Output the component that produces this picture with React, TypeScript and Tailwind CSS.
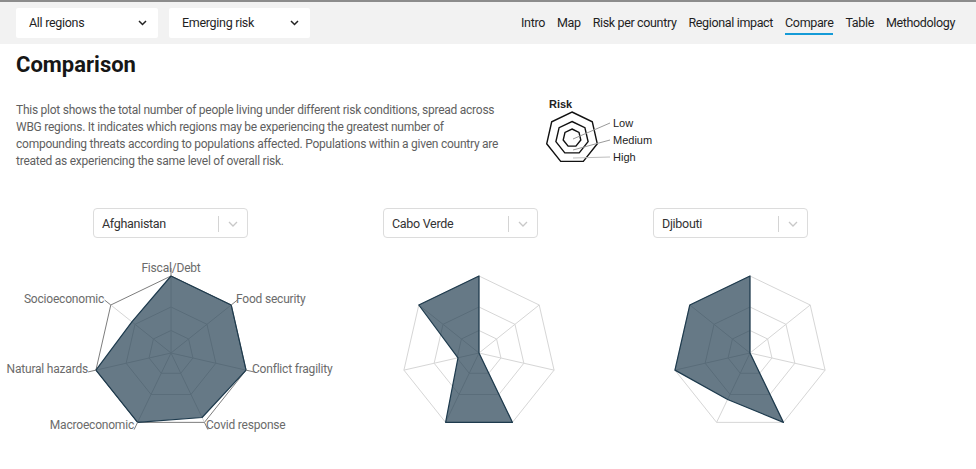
import React from "react";

const FONT = 'Roboto, "Noto Sans", Arial, sans-serif';

const AXES = [
  "Fiscal/Debt",
  "Food security",
  "Conflict fragility",
  "Covid response",
  "Macroeconomic",
  "Natural hazards",
  "Socioeconomic",
];

const R = 77;
const RINGS = [22.5, 46, 77];

function pt(cx: number, cy: number, r: number, i: number): [number, number] {
  const a = (i * 2 * Math.PI) / 7 - Math.PI / 2;
  return [cx + r * Math.cos(a), cy + r * Math.sin(a)];
}

function poly(cx: number, cy: number, rs: number[]): string {
  return rs.map((r, i) => pt(cx, cy, r, i).map((v) => v.toFixed(2)).join(",")).join(" ");
}

type LabelPos = { x: number; y: number; anchor: "start" | "middle" | "end" };

function Radar({
  width,
  cx,
  cy,
  values,
  labels,
  outerDark,
}: {
  width: number;
  cx: number;
  cy: number;
  values: number[];
  labels?: LabelPos[];
  outerDark?: boolean;
}) {
  return (
    <svg width={width} height={200} viewBox={`0 0 ${width} 200`} className="block">
      {RINGS.map((r, k) => (
        <polygon
          key={k}
          points={poly(cx, cy, Array(7).fill(r))}
          fill="none"
          stroke={k === 2 && outerDark ? "#7d7d7d" : "#d6d6d6"}
          strokeWidth={1}
        />
      ))}
      {AXES.map((_, i) => {
        const [x, y] = pt(cx, cy, R, i);
        return <line key={i} x1={cx} y1={cy} x2={x} y2={y} stroke="#d6d6d6" strokeWidth={1} />;
      })}
      <polygon
        points={poly(
          cx,
          cy,
          values.map((v) => v * R)
        )}
        fill="#1d3a4d"
        fillOpacity={0.68}
        stroke="#1d3a4d"
        strokeWidth={1.2}
        strokeLinejoin="round"
      />
      {labels &&
        AXES.map((name, i) => {
          const [x1, y1] = pt(cx, cy, R, i);
          const [x2, y2] = pt(cx, cy, R + 8, i);
          const l = labels[i];
          return (
            <g key={name}>
              <line x1={x1} y1={y1} x2={x2} y2={y2} stroke="#7d7d7d" strokeWidth={1} />
              <text
                x={l.x}
                y={l.y}
                textAnchor={l.anchor}
                dominantBaseline="central"
                fontSize={12}
                letterSpacing={-0.2}
                fill="#6b6b6b"
                style={{ fontFamily: FONT }}
              >
                {name}
              </text>
            </g>
          );
        })}
    </svg>
  );
}

function CountrySelect({ name, ml }: { name: string; ml: string }) {
  return (
    <div
      className={`${ml} flex h-[30px] w-[155px] items-center rounded-[4px] border border-[#dcdcdc] bg-white pl-[8px] pt-[2px] text-[12.5px] tracking-[-0.3px] text-[#333]`}
    >
      <span className="flex-1">{name}</span>
      <span className="h-[16px] w-px bg-[#d4d4d4]" />
      <span className="flex w-[28px] justify-center">
        <svg width="10" height="6" viewBox="0 0 10 6">
          <path d="M1 1l4 4 4-4" fill="none" stroke="#c8c8c8" strokeWidth="1.3" />
        </svg>
      </span>
    </div>
  );
}

function TopSelect({ label, w }: { label: string; w: string }) {
  return (
    <div
      className={`${w} flex h-[30px] items-center justify-between rounded-[2px] bg-white pl-[13px] pr-[11px] text-[12.5px] tracking-[-0.3px] text-[#1f1f1f]`}
    >
      <span>{label}</span>
      <svg width="9" height="6" viewBox="0 0 9 6">
        <path d="M1 1l3.5 3.5L8 1" fill="none" stroke="#222" strokeWidth="1.5" />
      </svg>
    </div>
  );
}

function Legend() {
  const c = [572, 139];
  const hept = (r: number) =>
    Array.from({ length: 7 }, (_, i) => {
      const a = (i * 2 * Math.PI) / 7 - Math.PI / 2;
      return `${(c[0] + r * Math.cos(a)).toFixed(1)},${(c[1] + r * Math.sin(a)).toFixed(1)}`;
    }).join(" ");
  return (
    <svg width="140" height="80" viewBox="540 95 140 80" className="block">
      <text
        x={549}
        y={105}
        dominantBaseline="central"
        fontSize={11}
        fontWeight={700}
        fill="#222"
        style={{ fontFamily: '"Liberation Sans", Arial, sans-serif' }}
      >
        Risk
      </text>
      {[26, 16.5, 9].map((r) => (
        <polygon key={r} points={hept(r)} fill="none" stroke="#111" strokeWidth={1.4} />
      ))}
      <line x1={573} y1={140} x2={610} y2={124} stroke="#9a9a9a" strokeWidth={1} />
      <line x1={573} y1={151} x2={610} y2={141} stroke="#9a9a9a" strokeWidth={1} />
      <line x1={573} y1={159} x2={610} y2={158} stroke="#bdbdbd" strokeWidth={1} />
      {[
        ["Low", 124],
        ["Medium", 141],
        ["High", 157.5],
      ].map(([t, y]) => (
        <text
          key={t as string}
          x={613}
          y={y as number}
          dominantBaseline="central"
          fontSize={11}
          fill="#222"
          style={{ fontFamily: '"Liberation Sans", Arial, sans-serif' }}
        >
          {t}
        </text>
      ))}
    </svg>
  );
}

export default function App() {
  const navItems = ["Intro", "Map", "Risk per country", "Regional impact", "Compare", "Table", "Methodology"];
  const afgLabels: LabelPos[] = [
    { x: 171, y: 23.5, anchor: "middle" },
    { x: 236, y: 54.5, anchor: "start" },
    { x: 252, y: 125, anchor: "start" },
    { x: 206, y: 181, anchor: "start" },
    { x: 134, y: 181, anchor: "end" },
    { x: 88, y: 125, anchor: "end" },
    { x: 104, y: 54.5, anchor: "end" },
  ];
  return (
    <div className="min-h-[469px] w-[976px] bg-white" style={{ fontFamily: FONT }}>
      <header className="flex h-[44px] items-center justify-between border-t-2 border-[#8c8c8c] bg-[#f2f2f2] pl-[16px] pr-[21px]">
        <div className="flex gap-[11px]">
          <TopSelect label="All regions" w="w-[142px]" />
          <TopSelect label="Emerging risk" w="w-[141px]" />
        </div>
        <nav className="flex gap-[12px] text-[12.5px] tracking-[-0.35px] text-[#1f1f1f]">
          {navItems.map((n) => (
            <span key={n} className={n === "Compare" ? "relative" : ""}>
              {n}
              {n === "Compare" && (
                <span className="absolute bottom-[-3px] left-0 right-0 h-[2px] bg-[#159bd7]" />
              )}
            </span>
          ))}
        </nav>
      </header>

      <h1 className="ml-[16px] mt-[7px] text-[22px] font-bold leading-[28px] text-[#161616]">Comparison</h1>

      <div className="mt-[23px] flex">
        <p className="ml-[16px] w-[500px] text-[12px] leading-[17px] tracking-[-0.25px] text-[#5f5f5f]">
          This plot shows the total number of people living under different risk conditions, spread across WBG
          regions. It indicates which regions may be experiencing the greatest number of compounding threats
          according to populations affected. Populations within a given country are treated as experiencing the
          same level of overall risk.
        </p>
        <div className="ml-[24px] mt-[-8px]">
          <Legend />
        </div>
      </div>

      <div className="mt-[34px] flex">
        <div className="w-[340px]">
          <CountrySelect name="Afghanistan" ml="ml-[93px]" />
          <div className="mt-[6px]">
            <Radar width={340} cx={171} cy={109} values={[1, 1, 1, 0.93, 1, 1, 0.65]} labels={afgLabels} outerDark />
          </div>
        </div>
        <div className="w-[270px]">
          <CountrySelect name="Cabo Verde" ml="ml-[43px]" />
          <div className="mt-[6px]">
            <Radar width={270} cx={139} cy={109} values={[1, 0, 0, 1, 1, 0.28, 1]} />
          </div>
        </div>
        <div className="w-[270px]">
          <CountrySelect name="Djibouti" ml="ml-[43px]" />
          <div className="mt-[6px]">
            <Radar width={270} cx={140} cy={109} values={[1, 0, 0, 1, 0.67, 1, 1]} />
          </div>
        </div>
      </div>
    </div>
  );
}
